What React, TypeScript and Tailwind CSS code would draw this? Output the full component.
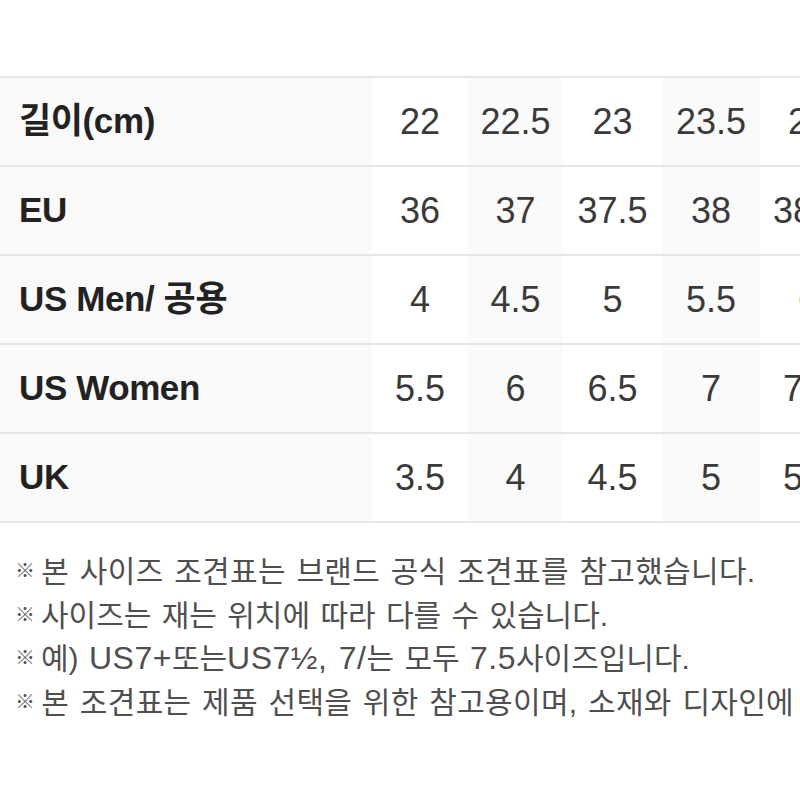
import React from "react";

const cols = [
  { w: "w-[96px]", bg: "bg-white" },
  { w: "w-[95px]", bg: "bg-[#fafafa]" },
  { w: "w-[99px]", bg: "bg-white" },
  { w: "w-[98px]", bg: "bg-[#fafafa]" },
  { w: "w-[96px]", bg: "bg-white" },
];

const rows: { label: string; values: string[] }[] = [
  { label: "길이(cm)", values: ["22", "22.5", "23", "23.5", "24"] },
  { label: "EU", values: ["36", "37", "37.5", "38", "38.5"] },
  { label: "US Men/ 공용", values: ["4", "4.5", "5", "5.5", "6"] },
  { label: "US Women", values: ["5.5", "6", "6.5", "7", "7.5"] },
  { label: "UK", values: ["3.5", "4", "4.5", "5", "5.5"] },
];

function Note({ children, className = "" }: { children: React.ReactNode; className?: string }) {
  return (
    <div className={`flex items-center ${className}`}>
      <span className="text-[20px] mr-[6px] text-[#555] font-bold">※</span>
      <span>{children}</span>
    </div>
  );
}

export default function App() {
  return (
    <div
      className="w-[800px] h-[800px] bg-white overflow-hidden"
      style={{ fontFamily: '"Liberation Sans", "Noto Sans CJK KR", sans-serif' }}
    >
      <div className="mt-[76px] w-[1000px] border-b-2 border-[#e6e6e6]">
        {rows.map((r) => (
          <div key={r.label} className="flex h-[89px] border-t-2 border-[#e6e6e6]">
            <div className="w-[372px] shrink-0 bg-[#f9f9f9] flex items-center pl-[19px] text-[35px] font-bold text-[#222] tracking-[-0.4px]">
              {r.label}
            </div>
            {r.values.map((v, i) => (
              <div
                key={i}
                className={`${cols[i].w} ${cols[i].bg} shrink-0 flex items-center justify-center text-[36px] text-[#3a3a3a]`}
              >
                {v}
              </div>
            ))}
          </div>
        ))}
      </div>
      <div className="mt-[27px] pl-[15px] text-[30px] leading-[43.5px] text-[#4f4f4f] whitespace-nowrap [word-spacing:2px]">
        <Note className="tracking-[0.3px]">본 사이즈 조견표는 브랜드 공식 조견표를 참고했습니다.</Note>
        <Note>사이즈는 재는 위치에 따라 다를 수 있습니다.</Note>
        <Note>
          예) <span className="text-[32px] tracking-[0.5px]">US7+</span>또는
          <span className="text-[32px] tracking-[0.5px]">US7½, 7/</span>는 모두{" "}
          <span className="text-[32px] tracking-[0.5px]">7.5</span>사이즈입니다.
        </Note>
        <Note className="tracking-[0.3px]">본 조견표는 제품 선택을 위한 참고용이며, 소재와 디자인에 따라 차이가 있을 수 있습니다.</Note>
      </div>
    </div>
  );
}
